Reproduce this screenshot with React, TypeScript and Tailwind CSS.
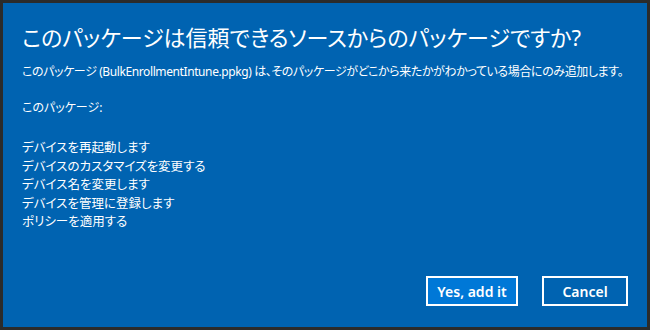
const font = { fontFamily: '"Noto Sans", "Noto Sans CJK JP", sans-serif' };

const steps = [
  'デバイスを再起動します',
  'デバイスのカスタマイズを変更する',
  'デバイス名を変更します',
  'デバイスを管理に登録します',
  'ポリシーを適用する',
];

export default function App() {
  return (
    <div
      className="w-[650px] h-[330px] border-[3px] border-[#2b2b2b] bg-[#0063b1] text-white flex flex-col [font-feature-settings:'palt']"
      style={font}
    >
      <div className="pl-[19px] pt-[19px] whitespace-nowrap">
        <h1 className="text-[22px] leading-[30px]">
          このパッケージは信頼できるソースからのパッケージですか?
        </h1>
        <p className="mt-[11px] text-[12px] leading-[18px] tracking-[-0.4px]">
          このパッケージ (BulkEnrollmentIntune.ppkg) は、そのパッケージがどこから来たかがわかっている場合にのみ追加します。
        </p>
        <p className="mt-[18px] text-[12px] leading-[18px]">このパッケージ:</p>
        <ul className="mt-[22px] text-[12.5px] leading-[18.5px]">
          {steps.map((s) => (
            <li key={s}>{s}</li>
          ))}
        </ul>
      </div>
      <div className="mt-auto flex justify-end gap-[24px] pr-[19px] pb-[21px]">
        <button className="w-[92px] h-[30px] border-2 border-white bg-[#0078d7] text-[14px] font-semibold">
          Yes, add it
        </button>
        <button className="w-[86px] h-[30px] border-2 border-white bg-[#0063b1] text-[14px] font-semibold">
          Cancel
        </button>
      </div>
    </div>
  );
}
